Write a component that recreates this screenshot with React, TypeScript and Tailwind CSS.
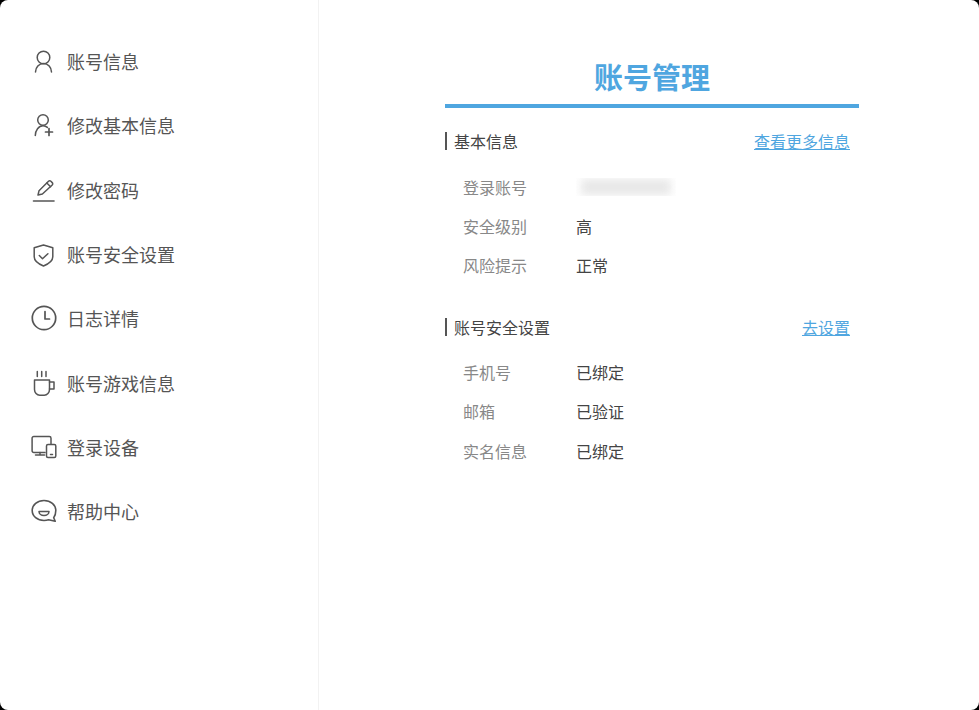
const menuItems = [
  { label: '账号信息', icon: 'user' },
  { label: '修改基本信息', icon: 'userPlus' },
  { label: '修改密码', icon: 'pen' },
  { label: '账号安全设置', icon: 'shield' },
  { label: '日志详情', icon: 'clock' },
  { label: '账号游戏信息', icon: 'cup' },
  { label: '登录设备', icon: 'devices' },
  { label: '帮助中心', icon: 'chat' },
]

function MenuIcon({ name }: { name: string }) {
  return (
    <svg width="26" height="28" viewBox="0 0 26 28" fill="none" stroke="#555" strokeWidth="1.5" strokeLinecap="round" strokeLinejoin="round" className="shrink-0">
      {name === 'user' && (
        <>
          <circle cx="12.5" cy="10.500" r="6.300" />
          <path d="M4.500 25c0-4.500 3.500-8.500 8-8.500s8 4 8 8.500" />
        </>
      )}
      {name === 'userPlus' && (
        <>
          <circle cx="12" cy="9" r="5.300" />
          <path d="M4.300 24.500c0-5 3.400-9.800 7.700-9.800 1.700 0 3.200.6 4.400 1.700" />
          <path d="M14.500 21h7M18 17.500v7" strokeWidth="1.700" />
        </>
      )}
      {name === 'pen' && (
        <>
          <path d="M7 19l1-4.200L17.500 5.300c.7-.7 1.700-.7 2.400 0l1.300 1.300c.7.7.7 1.700 0 2.400L11.400 18z" />
          <path d="M15.800 7l3.800 3.800" />
          <path d="M2.500 25h20.500" strokeWidth="1.600" />
        </>
      )}
      {name === 'shield' && (
        <>
          <path d="M12.500 5l9.300 2.800v9c0 4-3.800 7-9.300 9.200-5.500-2.200-9.300-5.200-9.300-9.200v-9z" />
          <path d="M8.300 15.500l3.200 3.200 5.400-5" />
        </>
      )}
      {name === 'clock' && (
        <>
          <circle cx="13" cy="14" r="11.700" strokeWidth="1.700" />
          <path d="M14 7.500v7.500h4.500" strokeWidth="1.700" />
        </>
      )}
      {name === 'cup' && (
        <>
          <path d="M6.300 2.500v5M10.700 2.500v5M15 2.500v5" />
          <path d="M3.500 11h15v9.500c0 3.200-2.400 5.700-5.200 5.700H8.700c-2.800 0-5.200-2.500-5.200-5.700z" />
          <path d="M18.500 13h4.500v7h-4.500" />
        </>
      )}
      {name === 'devices' && (
        <>
          <path d="M14 19.500H2.800c-1 0-1.700-.7-1.700-1.700V5.200c0-1 .7-1.700 1.700-1.700h15.500c1 0 1.700.7 1.700 1.700v5.500" />
          <path d="M4.500 22h9M9 19.500V22" />
          <rect x="15.500" y="11.500" width="9.300" height="13" rx="1.500" />
          <path d="M19.500 21.500h2" />
        </>
      )}
      {name === 'chat' && (
        <>
          <path d="M13 3.500C6.400 3.500 1.200 7.800 1.200 13.500S6.400 23.500 13 23.500c1.600 0 3.100-.2 4.600-.7l6.600 1.500-1.500-3.500c1.300-1.900 2.100-4.300 2.100-7.300C24.800 7.800 19.600 3.500 13 3.500z" strokeWidth="1.600" />
          <path d="M8 14.500h10c0 2.500-2.300 4-5 4s-5-1.500-5-4z" />
        </>
      )}
    </svg>
  )
}

function SectionHead({ title, link }: { title: string; link: string }) {
  return (
    <div className="flex items-center justify-between pr-[9px]">
      <h2 className="border-l-2 border-[#555] pl-[7px] text-base leading-[18px] text-[#444]">{title}</h2>
      <a href="#" className="text-base leading-[18px] text-[#4fa6e0] underline">{link}</a>
    </div>
  )
}

function InfoRow({ label, children }: { label: string; children: React.ReactNode }) {
  return (
    <div className="flex h-[39.4px] items-center pl-[18px] text-base">
      <span className="w-[113px] text-[#888]">{label}</span>
      <span className="text-[#444]">{children}</span>
    </div>
  )
}

export default function App() {
  return (
    <div className="h-[710px] w-[979px] bg-black font-['Noto_Sans_CJK_SC','Liberation_Sans',sans-serif]">
      <div className="flex h-full overflow-hidden rounded-lg bg-white">
        <aside className="w-[319px] shrink-0 border-r border-[#f2f2f2] pt-[29px]">
          {menuItems.map(item => (
            <div key={item.label} className="flex h-[64.3px] items-center gap-[10px] pl-[31px] text-lg text-[#555]">
              <MenuIcon name={item.icon} />
              <span>{item.label}</span>
            </div>
          ))}
        </aside>

        <main className="ml-[126px] w-[414px] pt-[56px]">
          <h1 className="h-[52px] border-b-4 border-[#4fa6e0] text-center text-[29px] font-bold leading-[40px] text-[#4fa6e0]">账号管理</h1>

          <div className="mt-[24px]">
            <SectionHead title="基本信息" link="查看更多信息" />
            <div className="mt-[17px]">
              <InfoRow label="登录账号">
                <span className="block h-[18px] w-[100px] overflow-hidden">
                  <span className="mx-auto mt-[1px] block h-[16px] w-[90px] bg-[#e8e8e8] blur-[4px]" />
                </span>
              </InfoRow>
              <InfoRow label="安全级别">高</InfoRow>
              <InfoRow label="风险提示">正常</InfoRow>
            </div>
          </div>

          <div className="mt-[33px]">
            <SectionHead title="账号安全设置" link="去设置" />
            <div className="mt-[16px]">
              <InfoRow label="手机号">已绑定</InfoRow>
              <InfoRow label="邮箱">已验证</InfoRow>
              <InfoRow label="实名信息">已绑定</InfoRow>
            </div>
          </div>
        </main>
      </div>
    </div>
  )
}
